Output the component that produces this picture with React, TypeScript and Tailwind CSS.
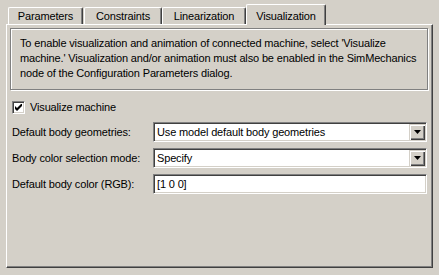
import React from 'react'

const FONT = { fontFamily: '"Liberation Sans", Arial, sans-serif' }

const TABS = [
  { label: 'Parameters', w: 'w-[75px]', ml: '' },
  { label: 'Constraints', w: 'w-[78px]', ml: 'ml-[1px]' },
  { label: 'Linearization', w: 'w-[84px]', ml: '' },
]

function Arrow() {
  return (
    <div className="w-[16px] h-[16px] bg-[#d4d0c8] shadow-[inset_1px_1px_#d4d0c8,inset_2px_2px_#fff,inset_-1px_-1px_#404040,inset_-2px_-2px_#808080] flex items-center justify-center">
      <svg width="7" height="4" viewBox="0 0 7 4"><path d="M0 0h7L3.5 4z" fill="#000" /></svg>
    </div>
  )
}

function Field({ value, select }: { value: string; select?: boolean }) {
  return (
    <div className="w-[274px] h-[20px] bg-white border border-t-[#808080] border-l-[#808080] border-b-white border-r-white shadow-[inset_1px_1px_#404040,inset_-1px_-1px_#d4d0c8] flex items-center pl-[3px] pr-[1px]">
      <span className="flex-1 text-[11px] text-black">{value}</span>
      {select && <Arrow />}
    </div>
  )
}

export default function App() {
  return (
    <div className="w-[439px] h-[275px] bg-[#d4d0c8] pt-[4px] px-[6px] text-black text-[11px] tracking-[-0.15px]" style={FONT}>
      <div className="flex items-end h-[20px] pl-[2px] relative z-10">
        {TABS.map((t) => (
          <div key={t.label} className={`${t.w} ${t.ml} h-[17px] border-t border-l border-white border-r border-r-[#404040] shadow-[inset_-1px_0_#808080] rounded-t-[2px] flex items-center justify-center pt-[1px]`}>
            {t.label}
          </div>
        ))}
        <div className="w-[80px] h-[21px] -mb-[1px] bg-[#d4d0c8] border-t border-l border-white border-r border-r-[#404040] shadow-[inset_-1px_0_#808080] rounded-t-[2px] flex items-start justify-center pt-[3px]">
          Visualization
        </div>
      </div>

      <div className="h-[244px] border-t border-l border-white border-r border-b border-r-[#404040] border-b-[#404040] shadow-[inset_-1px_-1px_#808080] pt-[3px] pl-[3px] pr-[5px]">
        <div className="h-[62px] mr-[-1px] border border-[#808080] shadow-[inset_1px_1px_#fff,1px_1px_#fff] pl-[9px] pt-[7px] leading-[15px]">
          To enable visualization and animation of connected machine, select 'Visualize machine.' Visualization and/or animation must also be enabled in the SimMechanics node of the Configuration Parameters dialog.
        </div>

        <div className="flex items-center mt-[11px] ml-[2px] h-[13px]">
          <div className="w-[13px] h-[13px] bg-white border border-t-[#808080] border-l-[#808080] border-b-white border-r-white shadow-[inset_1px_1px_#404040,inset_-1px_-1px_#d4d0c8] flex items-center justify-center">
            <svg width="7" height="7" viewBox="0 0 7 7"><path d="M0 2v3l2 2 5-5V-1L2 4z" fill="#000" /></svg>
          </div>
          <span className="ml-[5px]">Visualize machine</span>
        </div>

        <div className="flex flex-col gap-[6px] mt-[8px] ml-[2px]">
          <div className="flex items-center justify-between">
            <span>Default body geometries:</span>
            <Field value="Use model default body geometries" select />
          </div>
          <div className="flex items-center justify-between">
            <span>Body color selection mode:</span>
            <Field value="Specify" select />
          </div>
          <div className="flex items-center justify-between">
            <span>Default body color (RGB):</span>
            <Field value="[1 0 0]" />
          </div>
        </div>
      </div>
    </div>
  )
}
